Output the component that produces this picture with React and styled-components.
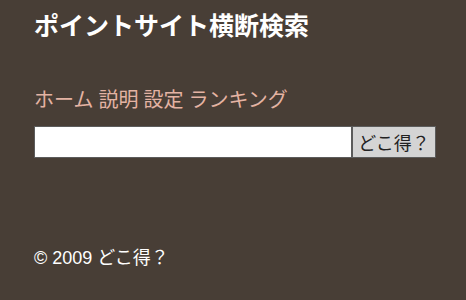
import React from "react"
import styled, { createGlobalStyle } from "styled-components"

const GlobalStyle = createGlobalStyle`
  html, body {
    margin: 0;
    padding: 0;
    background: #483e36;
  }
  body {
    font-family: "Liberation Sans", "Noto Sans CJK JP", sans-serif;
    color: #ffffff;
  }
`

const Page = styled.div`
  width: 466px;
  height: 300px;
  box-sizing: border-box;
  padding: 10px 30px 0 34px;
  display: flex;
  flex-direction: column;
`

const Title = styled.h1`
  margin: 0;
  font-size: 25px;
  font-weight: bold;
  line-height: 32px;
  color: #ffffff;
`

const Nav = styled.nav`
  margin-top: 45px;
  display: flex;
  gap: 5px;
  font-size: 20px;
  line-height: 26px;
`

const NavLink = styled.a`
  color: #e4b3a3;
  text-decoration: none;
`

const Form = styled.form`
  margin-top: 13px;
  display: flex;
`

const Input = styled.input`
  width: 319px;
  height: 32px;
  box-sizing: border-box;
  margin: 0;
  border: 1px solid #5c5c5c;
  background: #ffffff;
`

const Button = styled.button`
  width: 84px;
  height: 32px;
  box-sizing: border-box;
  margin: 0;
  padding: 0;
  border: 1px solid #5c5c5c;
  background: #d4d4d4;
  color: #222222;
  font-family: "Liberation Sans", "Noto Sans CJK JP", sans-serif;
  font-size: 18px;
`

const Footer = styled.footer`
  margin-top: 88px;
  font-size: 18px;
  line-height: 24px;
  color: #ffffff;
`

const links = ["ホーム", "説明", "設定", "ランキング"]

const App = () => {
  return (
    <>
      <GlobalStyle />
      <Page>
        <Title>ポイントサイト横断検索</Title>
        <Nav>
          {links.map((item, i) => (
            <NavLink key={i} href="#">{item}</NavLink>
          ))}
        </Nav>
        <Form onSubmit={(e) => e.preventDefault()}>
          <Input type="text" />
          <Button type="submit">どこ得？</Button>
        </Form>
        <Footer>© 2009 どこ得？</Footer>
      </Page>
    </>
  )
}

export default App
